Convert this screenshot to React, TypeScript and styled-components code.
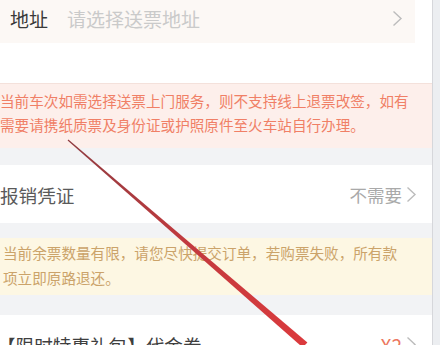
import React from 'react'
import styled, { createGlobalStyle } from 'styled-components'

const GlobalStyle = createGlobalStyle`
  html, body {
    margin: 0;
    padding: 0;
    background: #ffffff;
    overflow: hidden;
  }
  body {
    font-family: "Noto Sans CJK SC", "Noto Sans", sans-serif;
  }
`

const Page = styled.div`
  position: relative;
  display: flex;
  width: 440px;
  height: 345px;
  overflow: hidden;
`

const Main = styled.div`
  width: 432px;
  display: flex;
  flex-direction: column;
  background: #f2f3f5;
  & > * {
    flex-shrink: 0;
  }
`

const Edge = styled.div`
  flex: 1;
  background: #eceef1;
  border-left: 1px solid #d6d7db;
`

const AddressBlock = styled.div`
  height: 83px;
  background: #ffffff;
`

const AddressField = styled.div`
  width: 415px;
  height: 43px;
  background: #fcf8f5;
  display: flex;
  align-items: center;
  padding: 0 12px 6px 10px;
  box-sizing: border-box;
  font-size: 19px;
`

const Label = styled.span`
  color: #3a3a3a;
  margin-right: 19px;
`

const Placeholder = styled.span`
  flex: 1;
  color: #cacaca;
`

const Notice = styled.div<{ $tone: 'pink' | 'yellow' }>`
  font-size: 14.6px;
  line-height: ${(p) => (p.$tone === 'pink' ? '24px' : '25px')};
  padding: ${(p) => (p.$tone === 'pink' ? '5px 0 11px 0' : '2px 0 5px 3px')};
  background: ${(p) => (p.$tone === 'pink' ? '#fdefeb' : '#fdf7e3')};
  color: ${(p) => (p.$tone === 'pink' ? '#f07f66' : '#cba36a')};
  border-top: ${(p) => (p.$tone === 'pink' ? '1px solid #f4e1db' : 'none')};
  white-space: nowrap;
`

const Gap = styled.div<{ $h: number }>`
  height: ${(p) => p.$h}px;
`

const Row = styled.div`
  height: 58px;
  background: #ffffff;
  display: flex;
  align-items: center;
  padding: 0 15px 0 0;
  font-size: 18.6px;
`

const RowTitle = styled.span<{ $dark?: boolean }>`
  flex: 1;
  color: ${(p) => (p.$dark ? '#3f3f3f' : '#5a5a5a')};
  margin-left: ${(p) => (p.$dark ? '-3px' : '0')};
`

const RowValue = styled.span<{ $accent?: boolean }>`
  color: ${(p) => (p.$accent ? '#ec7760' : '#a9a9a9')};
  font-size: ${(p) => (p.$accent ? '19px' : '17.5px')};
  margin-right: 4px;
`

const Arrow = styled.svg`
  width: 11px;
  height: 17px;
  flex-shrink: 0;
`

const Overlay = styled.svg`
  position: absolute;
  left: 0;
  top: 0;
  pointer-events: none;
`

const Chevron = () => (
  <Arrow viewBox="0 0 11 17">
    <polyline points="1.5,1.5 9,8.5 1.5,15.5" fill="none" stroke="#bcbcbc" strokeWidth="1.4" />
  </Arrow>
)

export default function App() {
  return (
    <>
      <GlobalStyle />
      <Page>
        <Main>
          <AddressBlock>
            <AddressField>
              <Label>地址</Label>
              <Placeholder>请选择送票地址</Placeholder>
              <Chevron />
            </AddressField>
          </AddressBlock>
          <Notice $tone="pink">
            当前车次如需选择送票上门服务，则不支持线上退票改签，如有
            <br />
            需要请携纸质票及身份证或护照原件至火车站自行办理。
          </Notice>
          <Gap $h={17} />
          <Row>
            <RowTitle>报销凭证</RowTitle>
            <RowValue>不需要</RowValue>
            <Chevron />
          </Row>
          <Gap $h={15} />
          <Notice $tone="yellow">
            当前余票数量有限，请您尽快提交订单，若购票失败，所有款
            <br />
            项立即原路退还。
          </Notice>
          <Gap $h={20} />
          <Row>
            <RowTitle $dark>【限时特惠礼包】代金券</RowTitle>
            <RowValue $accent>X2</RowValue>
            <Chevron />
          </Row>
        </Main>
        <Edge />
        <Overlay width="440" height="345" viewBox="0 0 440 345">
          <defs>
            <linearGradient id="pen" x1="68" y1="140" x2="305" y2="345" gradientUnits="userSpaceOnUse">
              <stop offset="0" stopColor="#8e3b40" />
              <stop offset="0.5" stopColor="#c23a3e" />
              <stop offset="1" stopColor="#db3a3d" />
            </linearGradient>
          </defs>
          <polygon points="68.4,139.6 307.4,342.6 302.6,347.4 67.6,140.4" fill="url(#pen)" />
        </Overlay>
      </Page>
    </>
  )
}
